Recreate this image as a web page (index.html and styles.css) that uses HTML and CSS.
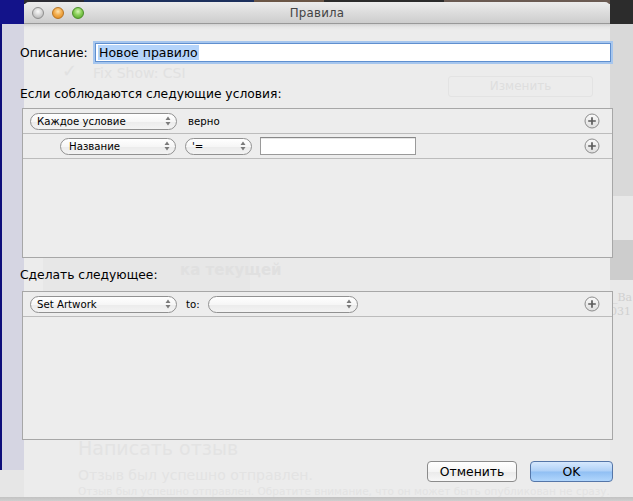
FILE: index.html
```html
<!DOCTYPE html>
<html lang="ru">
<head>
<meta charset="utf-8">
<title>Правила</title>
<link rel="stylesheet" href="styles.css">
</head>
<body>
<div class="desk">
  <div class="layer top-left"></div>
  <div class="layer top-strip"></div>
  <div class="layer top-right"></div>
  <div class="layer left-strip"></div>
  <div class="layer left-low"></div>
  <div class="layer left-bottom"></div>
  <div class="layer right-a"></div>
  <div class="layer right-b"></div>
  <div class="layer right-sq"></div>
  <div class="layer right-c"></div>
  <div class="layer win-body"></div>
  <div class="layer shade-a"></div>
  <div class="layer shade-b"></div>
  <div class="layer ghost g-check">✓</div>
  <div class="layer ghost g-fix">Fix Show: CSI</div>
  <div class="layer ghost-btn">Изменить</div>
  <div class="layer ghost g-cover">ка текущей</div>
  <div class="layer ghost g-review">Написать отзыв</div>
  <div class="layer ghost g-sent">Отзыв был успешно отправлен.</div>
  <div class="layer ghost g-note">Отзыв был успешно отправлен. Обратите внимание, что он может быть опубликован не сразу.</div>
  <div class="layer ghost-r g-ba">_Ba</div>
  <div class="layer ghost-r g-031">031</div>
  <div class="layer bottom-band"></div>
</div>

<div class="dialog">
  <div class="titlebar">
    <div class="lights">
      <span class="light l-close"></span>
      <span class="light l-min"></span>
      <span class="light l-zoom"></span>
    </div>
    <div class="title">Правила</div>
    <div></div>
  </div>

  <div class="content">
    <div class="desc-row">
      <div class="desc-label">Описание:</div>
      <div class="field focus"><span class="sel">Новое правило</span></div>
    </div>

    <div class="section-label cond-label">Если соблюдаются следующие условия:</div>
    <div class="frame frame-cond">
      <div class="row">
        <div class="popup w-every"><span class="lbl">Каждое условие</span><svg class="arr" width="6" height="10" viewBox="0 0 6 10"><path d="M3 0.5 L5.5 4 L0.5 4 Z M3 9.5 L5.5 6 L0.5 6 Z" fill="#7a7a7a"/></svg></div>
        <span class="word verno">верно</span>
        <svg class="plus" width="16" height="16" viewBox="0 0 16 16"><defs><linearGradient id="pg1" x1="0" y1="0" x2="0" y2="1"><stop offset="0" stop-color="#fafafa"/><stop offset="1" stop-color="#dedede"/></linearGradient></defs><circle cx="8" cy="8" r="7" fill="url(#pg1)" stroke="#8c8c8c" stroke-width="1"/><path d="M8 4.2 V11.8 M4.2 8 H11.8" stroke="#5c5c5c" stroke-width="1.7"/></svg>
      </div>
      <div class="row indent">
        <div class="popup w-name"><span class="lbl">Название</span><svg class="arr" width="6" height="10" viewBox="0 0 6 10"><path d="M3 0.5 L5.5 4 L0.5 4 Z M3 9.5 L5.5 6 L0.5 6 Z" fill="#7a7a7a"/></svg></div>
        <div class="popup w-op"><span class="lbl">'=</span><svg class="arr" width="6" height="10" viewBox="0 0 6 10"><path d="M3 0.5 L5.5 4 L0.5 4 Z M3 9.5 L5.5 6 L0.5 6 Z" fill="#7a7a7a"/></svg></div>
        <div class="field small"></div>
        <svg class="plus" width="16" height="16" viewBox="0 0 16 16"><defs><linearGradient id="pg2" x1="0" y1="0" x2="0" y2="1"><stop offset="0" stop-color="#fafafa"/><stop offset="1" stop-color="#dedede"/></linearGradient></defs><circle cx="8" cy="8" r="7" fill="url(#pg2)" stroke="#8c8c8c" stroke-width="1"/><path d="M8 4.2 V11.8 M4.2 8 H11.8" stroke="#5c5c5c" stroke-width="1.7"/></svg>
      </div>
    </div>

    <div class="section-label act-label">Сделать следующее:</div>
    <div class="frame frame-act">
      <div class="row">
        <div class="popup w-every"><span class="lbl">Set Artwork</span><svg class="arr" width="6" height="10" viewBox="0 0 6 10"><path d="M3 0.5 L5.5 4 L0.5 4 Z M3 9.5 L5.5 6 L0.5 6 Z" fill="#7a7a7a"/></svg></div>
        <span class="word to">to:</span>
        <div class="popup w-empty"><span class="lbl"></span><svg class="arr" width="6" height="10" viewBox="0 0 6 10"><path d="M3 0.5 L5.5 4 L0.5 4 Z M3 9.5 L5.5 6 L0.5 6 Z" fill="#7a7a7a"/></svg></div>
        <svg class="plus" width="16" height="16" viewBox="0 0 16 16"><defs><linearGradient id="pg3" x1="0" y1="0" x2="0" y2="1"><stop offset="0" stop-color="#fafafa"/><stop offset="1" stop-color="#dedede"/></linearGradient></defs><circle cx="8" cy="8" r="7" fill="url(#pg3)" stroke="#8c8c8c" stroke-width="1"/><path d="M8 4.2 V11.8 M4.2 8 H11.8" stroke="#5c5c5c" stroke-width="1.7"/></svg>
      </div>
    </div>

    <div class="buttons">
      <div class="btn cancel">Отменить</div>
      <div class="btn ok">OK</div>
    </div>
  </div>
</div>
</body>
</html>
```
FILE: styles.css
```css
* { box-sizing: border-box; }
html, body { margin: 0; padding: 0; }
body {
  width: 633px;
  height: 501px;
  overflow: hidden;
  position: relative;
  background: #e6e6e6;
  font-family: "DejaVu Sans", "Noto Sans", sans-serif;
  font-size: 12.3px;
  color: #000;
}

/* ---------- desktop behind the sheet ---------- */
.desk { position: absolute; left: 0; top: 0; width: 633px; height: 501px; overflow: hidden; }
.layer { position: absolute; }
.top-left { left: 0; top: 0; width: 24px; height: 24px; background: #13138a; }
.top-strip {
  left: 24px; top: 0; width: 586px; height: 4px;
  background: linear-gradient(90deg, #2b2b33 0 60px, #1c2f5c 60px 230px, #6b5646 230px 300px, #2a2a2a 300px 420px, #6a5a52 420px 586px);
}
.top-right { left: 610px; top: 0; width: 23px; height: 24px; background: #2c2c2c; }
.left-strip { left: 0; top: 24px; width: 24px; height: 446px; background: #d5d5e2; border-left: 2px solid #0e0e7a; }
.left-low { left: 0; top: 440px; width: 43px; height: 30px; background: #d5d5e2; border-left: 2px solid #0e0e7a; }
.left-bottom { left: 0; top: 470px; width: 43px; height: 31px; background: #e6e6e6; }
.right-a { left: 610px; top: 24px; width: 23px; height: 172px; background: #d9d9d9; }
.right-b { left: 610px; top: 196px; width: 23px; height: 44px; background: #e8e8e8; }
.right-sq { left: 600px; top: 240px; width: 33px; height: 40px; background: #cdcdcd; }
.right-c { left: 610px; top: 280px; width: 23px; height: 221px; background: #e9e9e9; }
.win-body {
  left: 24px; top: 24px; width: 586px; height: 473px;
  background: linear-gradient(#d2d2d2 0, #e6e6e6 3px, #ececec 6px, #ececec 100%);
}
.shade-a { left: 43px; top: 258px; width: 207px; height: 33px; background: #e7e7e7; }
.shade-b { left: 250px; top: 258px; width: 290px; height: 33px; background: #eaeaea; }
.ghost { color: #e1e1e1; white-space: nowrap; }
.g-check { left: 62px; top: 60px; font-size: 18px; }
.g-fix { left: 93px; top: 65px; font-size: 14px; }
.ghost-btn {
  left: 448px; top: 76px; width: 145px; height: 21px;
  border: 1px solid #e3e3e3; border-radius: 3px;
  color: #dedede; font-size: 12px; text-align: center; line-height: 19px;
}
.g-cover { left: 180px; top: 261px; font-size: 15px; color: #e0e0e0; font-weight: bold; }
.g-review { left: 78px; top: 437px; font-size: 19px; color: #e3e3e3; }
.g-sent { left: 78px; top: 467px; font-size: 14px; color: #e3e3e3; }
.g-note { left: 78px; top: 485px; font-size: 10.5px; line-height: 12px; color: #e3e3e3; }
.ghost-r { color: #d0d0d0; font-size: 11px; line-height: 12px; font-family: "DejaVu Serif", serif; }
.g-ba { left: 612px; top: 292px; }
.g-031 { left: 610px; top: 306px; }
.bottom-band { left: 0; top: 497px; width: 633px; height: 4px; background: linear-gradient(#c2c2c2, #cfcfcf); }

/* ---------- the dialog ---------- */
.dialog { position: relative; z-index: 1; }
.titlebar {
  margin: 2px 0 0 24px;
  width: 586px;
  height: 22px;
  border-radius: 5px 5px 0 0;
  background: linear-gradient(#ececec, #d9d9d9 60%, #cdcdcd);
  border-bottom: 1px solid #999;
  display: grid;
  grid-template-columns: 1fr auto 1fr;
  align-items: center;
}
.lights { display: flex; gap: 8px; padding-left: 8px; }
.light { width: 12px; height: 12px; border-radius: 50%; display: block; }
.l-close { background: radial-gradient(circle at 50% 35%, #fbfbfb 0, #d7d7d7 45%, #a9a9a9 100%); border: 1px solid #8f8f8f; }
.l-min { background: radial-gradient(circle at 50% 35%, #fde3b0 0, #f3ad4e 45%, #d98419 100%); border: 1px solid #b87322; }
.l-zoom { background: radial-gradient(circle at 50% 35%, #d6f5b5 0, #88cf57 45%, #4e9f25 100%); border: 1px solid #4a8e28; }
.title { font-size: 11.8px; color: #444; letter-spacing: 0.2px; }

.content { padding: 17px 20px 0 20px; }

.desc-row { display: flex; align-items: center; height: 23px; }
.desc-label { width: 75px; }
.field { background: #fff; }
.field.focus {
  width: 516px;
  height: 19px;
  border: 1px solid #5f8fcf;
  box-shadow: 0 0 0 2px #a6c6ee;
  display: flex;
  align-items: center;
  padding-left: 2px;
  font-size: 12.5px;
}
.sel { background: #b4d4fb; line-height: 15px; padding: 0 1px; }

.section-label { line-height: 16px; height: 16px; }
.cond-label { margin-top: 22px; }
.act-label { margin-top: 9px; }

.frame {
  margin-left: 2px;
  border: 1px solid #a7a7a7;
  background: #ededed;
}
.frame-cond { margin-top: 6px; height: 150px; }
.frame-act { margin-top: 8px; height: 149px; }

.row {
  height: 25px;
  border-bottom: 1px solid #bcbcbc;
  display: flex;
  align-items: center;
  padding: 0 12px 0 7px;
}
.row.indent { padding-left: 37px; }

.popup {
  height: 17px;
  border: 1px solid #919191;
  border-radius: 9px;
  background: linear-gradient(#ffffff, #f6f6f6 50%, #ebebeb 51%, #f3f3f3);
  display: flex;
  align-items: center;
  padding: 0 5px 0 6px;
  font-size: 10.2px;
  white-space: nowrap;
}
.popup .lbl { flex: 1; }
.arr { display: block; }
.w-every { width: 147px; }
.w-name { width: 116px; padding-left: 8px; }
.w-op { width: 67px; margin-left: 9px; }
.w-empty { width: 150px; margin-left: 8px; }
.field.small {
  width: 156px;
  height: 18px;
  margin-left: 8px;
  border: 1px solid #9a9a9a;
  border-top-color: #888;
  box-shadow: inset 0 1px 0 #e6e6e6;
}
.word { font-size: 10.2px; }
.verno { margin-left: 11px; }
.to { margin-left: 9px; }
.plus { margin-left: auto; display: block; }

.buttons {
  margin-top: 21px;
  display: flex;
  justify-content: flex-end;
  gap: 13px;
}
.btn {
  height: 21px;
  border-radius: 4px;
  font-size: 12.4px;
  display: flex;
  align-items: center;
  justify-content: center;
}
.cancel {
  width: 90px;
  border: 1px solid #8b8b8b;
  background: linear-gradient(#ffffff, #f5f5f5 50%, #eaeaea 51%, #f7f7f7);
}
.ok {
  width: 83px;
  border: 1px solid #5576a8;
  background: linear-gradient(#d6e8fd, #aed0f7 48%, #90bff3 52%, #b0d6fc);
}
```
